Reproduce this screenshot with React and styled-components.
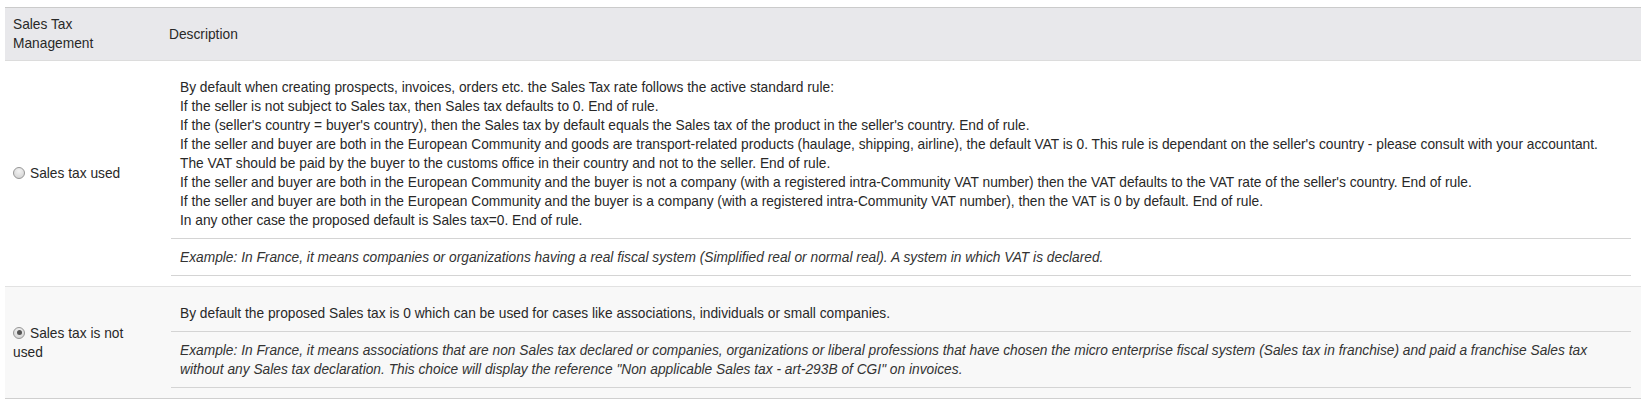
import React, { useState } from 'react'
import styled, { createGlobalStyle } from 'styled-components'

const GlobalStyle = createGlobalStyle`
  body {
    margin: 0;
    background: #fff;
    font-family: "Liberation Sans", Arial, sans-serif;
    font-size: 13.75px;
    color: #282828;
  }
`

const Page = styled.div`
  padding: 7px 7px 0 5px;
`

const Table = styled.table`
  width: 100%;
  border-collapse: collapse;
  line-height: 19px;
`

const HeadRow = styled.tr`
  background: #e8e8eb;
  border-top: 1px solid #cbcbcb;
  border-bottom: 1px solid #dcdcdc;
`

const Th = styled.th`
  text-align: left;
  font-weight: normal;
  vertical-align: middle;
  padding: 7px 8px;
  width: ${p => (p.$narrow ? '140px' : 'auto')};
`

const Row = styled.tr`
  background: ${p => (p.$shaded ? '#f8f8f8' : '#fff')};
  border-bottom: 1px solid ${p => (p.$last ? '#cfcfcf' : '#e2e2e2')};
`

const ChoiceCell = styled.td`
  vertical-align: middle;
  padding: 8px;
  width: 140px;
`

const DescCell = styled.td`
  vertical-align: top;
  padding: 8px 10px 10px 10px;
`

const Choice = styled.label`
  cursor: pointer;
`

const Radio = styled.span`
  display: inline-block;
  box-sizing: border-box;
  width: 12px;
  height: 12px;
  margin: 0 5px 0 0;
  border-radius: 50%;
  border: 1px solid #979797;
  background: radial-gradient(circle at 50% 30%, #f3f3f3 0%, #dadada 70%, #c9c9c9 100%);
  vertical-align: -1px;
  position: relative;

  &::after {
    content: '';
    display: ${p => (p.$checked ? 'block' : 'none')};
    position: absolute;
    left: 2.5px;
    top: 2.5px;
    width: 5px;
    height: 5px;
    border-radius: 50%;
    background: #555;
  }
`

const Inner = styled.table`
  width: 100%;
  border-collapse: collapse;
`

const InnerRow = styled.tr`
  border-bottom: 1px solid #d4d4d4;
`

const Rule = styled.td`
  padding: 9px 9px 8px 9px;
`

const Example = styled.td`
  padding: 9px 9px 8px 9px;
  font-style: italic;
  color: #333;
`

const rules = [
  'By default when creating prospects, invoices, orders etc. the Sales Tax rate follows the active standard rule:',
  'If the seller is not subject to Sales tax, then Sales tax defaults to 0. End of rule.',
  "If the (seller's country = buyer's country), then the Sales tax by default equals the Sales tax of the product in the seller's country. End of rule.",
  "If the seller and buyer are both in the European Community and goods are transport-related products (haulage, shipping, airline), the default VAT is 0. This rule is dependant on the seller's country - please consult with your accountant.",
  'The VAT should be paid by the buyer to the customs office in their country and not to the seller. End of rule.',
  "If the seller and buyer are both in the European Community and the buyer is not a company (with a registered intra-Community VAT number) then the VAT defaults to the VAT rate of the seller's country. End of rule.",
  'If the seller and buyer are both in the European Community and the buyer is a company (with a registered intra-Community VAT number), then the VAT is 0 by default. End of rule.',
  'In any other case the proposed default is Sales tax=0. End of rule.',
]

const options = [
  {
    id: 'used',
    label: 'Sales tax used',
    text: rules,
    example:
      'Example: In France, it means companies or organizations having a real fiscal system (Simplified real or normal real). A system in which VAT is declared.',
  },
  {
    id: 'notused',
    label: 'Sales tax is not used',
    text: ['By default the proposed Sales tax is 0 which can be used for cases like associations, individuals or small companies.'],
    example:
      'Example: In France, it means associations that are non Sales tax declared or companies, organizations or liberal professions that have chosen the micro enterprise fiscal system (Sales tax in franchise) and paid a franchise Sales tax without any Sales tax declaration. This choice will display the reference "Non applicable Sales tax - art-293B of CGI" on invoices.',
  },
]

export default function App() {
  const [selected, setSelected] = useState('notused')

  return (
    <Page>
      <GlobalStyle />
      <Table>
        <thead>
          <HeadRow>
            <Th $narrow>Sales Tax Management</Th>
            <Th>Description</Th>
          </HeadRow>
        </thead>
        <tbody>
          {options.map((o, i) => (
            <Row key={o.id} $shaded={i % 2 === 1} $last={i === options.length - 1}>
              <ChoiceCell>
                <Choice onClick={() => setSelected(o.id)}>
                  <Radio $checked={selected === o.id} />
                  {o.label}
                </Choice>
              </ChoiceCell>
              <DescCell>
                <Inner>
                  <tbody>
                    <InnerRow>
                      <Rule>
                        {o.text.map((line, j) => (
                          <React.Fragment key={j}>
                            {line}
                            {j < o.text.length - 1 && <br />}
                          </React.Fragment>
                        ))}
                      </Rule>
                    </InnerRow>
                    <InnerRow>
                      <Example>{o.example}</Example>
                    </InnerRow>
                  </tbody>
                </Inner>
              </DescCell>
            </Row>
          ))}
        </tbody>
      </Table>
    </Page>
  )
}
